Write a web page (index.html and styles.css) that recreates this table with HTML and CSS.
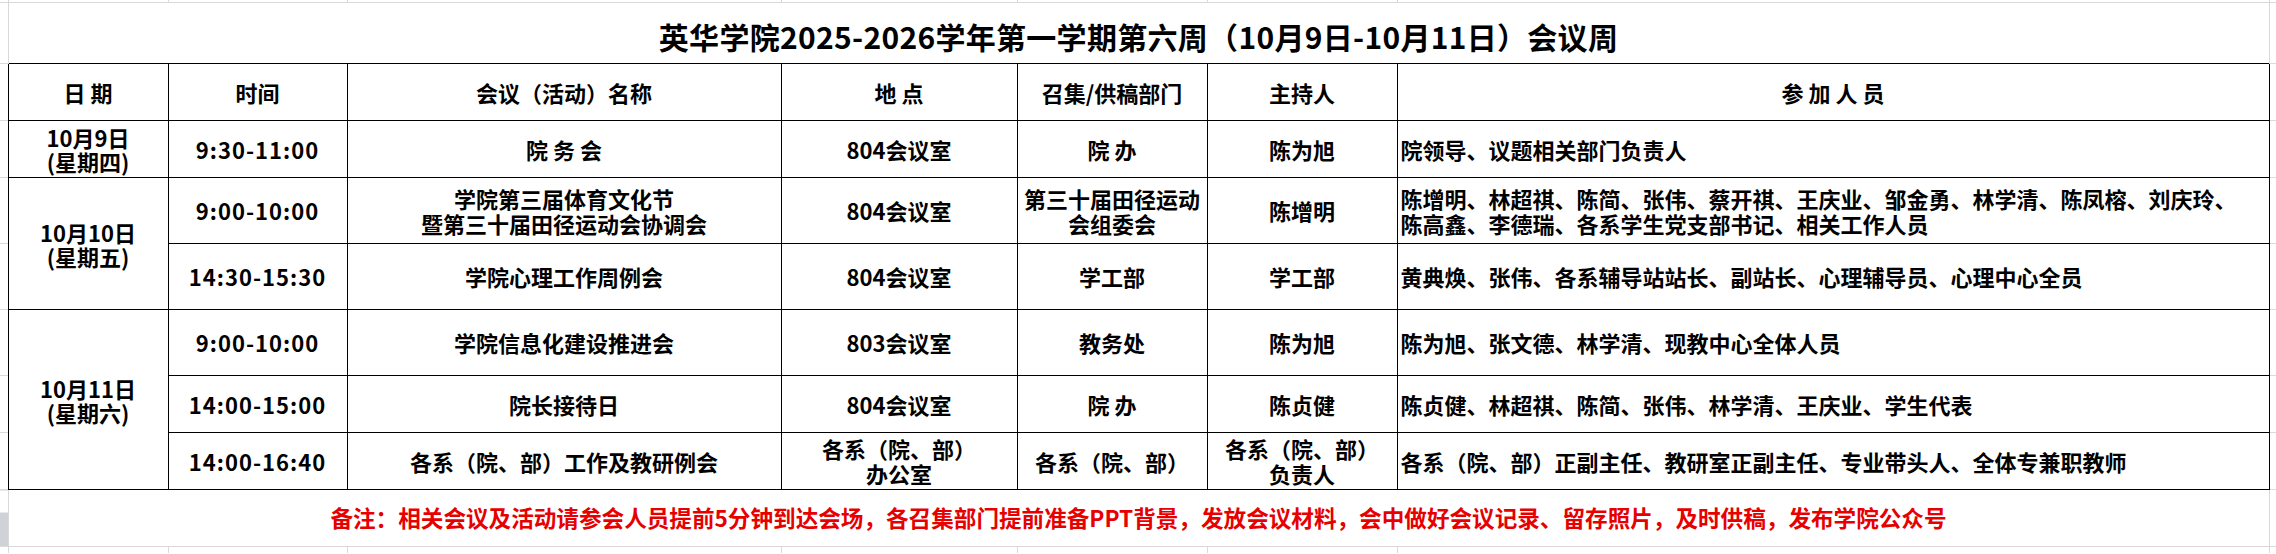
FILE: index.html
```html
<!DOCTYPE html>
<html lang="zh-CN">
<head>
<meta charset="utf-8">
<title>英华学院会议周</title>
<link rel="stylesheet" href="styles.css">
</head>
<body>
<table class="sheet">
  <colgroup>
    <col class="c-gut">
    <col class="c-date">
    <col class="c-time">
    <col class="c-name">
    <col class="c-place">
    <col class="c-dept">
    <col class="c-host">
    <col class="c-people">
    <col class="c-gut-r">
  </colgroup>
  <tr class="stub stub-top">
    <td class="gl"></td><td></td><td></td><td></td><td></td><td></td><td></td><td></td><td class="gr"></td>
  </tr>
  <tr class="row-title">
    <td class="gl"></td>
    <td class="title" colspan="7">英华学院2025-2026学年第一学期第六周（10月9日-10月11日）会议周</td>
    <td class="gr"></td>
  </tr>
  <tr class="row-57 head">
    <td class="gl"></td>
    <th>日 期</th>
    <th>时间</th>
    <th>会议（活动）名称</th>
    <th>地 点</th>
    <th>召集/供稿部门</th>
    <th>主持人</th>
    <th>参 加 人 员</th>
    <td class="gr"></td>
  </tr>
  <tr class="row-57 data">
    <td class="gl"></td>
    <td class="cell date">10月9日<br>(星期四)</td>
    <td class="cell time">9:30-11:00</td>
    <td class="cell">院 务 会</td>
    <td class="cell">804会议室</td>
    <td class="cell">院 办</td>
    <td class="cell">陈为旭</td>
    <td class="cell people">院领导、议题相关部门负责人</td>
    <td class="gr"></td>
  </tr>
  <tr class="row-66 data">
    <td class="gl"></td>
    <td class="cell date" rowspan="2">10月10日<br>(星期五)</td>
    <td class="cell time">9:00-10:00</td>
    <td class="cell">学院第三届体育文化节<br>暨第三十届田径运动会协调会</td>
    <td class="cell">804会议室</td>
    <td class="cell">第三十届田径运动<br>会组委会</td>
    <td class="cell">陈增明</td>
    <td class="cell people">陈增明、林超祺、陈简、张伟、蔡开祺、王庆业、邹金勇、林学清、陈凤榕、刘庆玲、<br>陈高鑫、李德瑞、各系学生党支部书记、相关工作人员</td>
    <td class="gr"></td>
  </tr>
  <tr class="row-66 data">
    <td class="gl"></td>
    <td class="cell time">14:30-15:30</td>
    <td class="cell">学院心理工作周例会</td>
    <td class="cell">804会议室</td>
    <td class="cell">学工部</td>
    <td class="cell">学工部</td>
    <td class="cell people">黄典焕、张伟、各系辅导站站长、副站长、心理辅导员、心理中心全员</td>
    <td class="gr"></td>
  </tr>
  <tr class="row-66 data">
    <td class="gl"></td>
    <td class="cell date" rowspan="3">10月11日<br>(星期六)</td>
    <td class="cell time">9:00-10:00</td>
    <td class="cell">学院信息化建设推进会</td>
    <td class="cell">803会议室</td>
    <td class="cell">教务处</td>
    <td class="cell">陈为旭</td>
    <td class="cell people">陈为旭、张文德、林学清、现教中心全体人员</td>
    <td class="gr"></td>
  </tr>
  <tr class="row-57 data">
    <td class="gl"></td>
    <td class="cell time">14:00-15:00</td>
    <td class="cell">院长接待日</td>
    <td class="cell">804会议室</td>
    <td class="cell">院 办</td>
    <td class="cell">陈贞健</td>
    <td class="cell people">陈贞健、林超祺、陈简、张伟、林学清、王庆业、学生代表</td>
    <td class="gr"></td>
  </tr>
  <tr class="row-57 data">
    <td class="gl"></td>
    <td class="cell time">14:00-16:40</td>
    <td class="cell">各系（院、部）工作及教研例会</td>
    <td class="cell">各系（院、部）<br>办公室</td>
    <td class="cell">各系（院、部）</td>
    <td class="cell">各系（院、部）<br>负责人</td>
    <td class="cell people">各系（院、部）正副主任、教研室正副主任、专业带头人、全体专兼职教师</td>
    <td class="gr"></td>
  </tr>
  <tr class="row-57 row-note">
    <td class="gl gl-mark"></td>
    <td class="note" colspan="7">备注：相关会议及活动请参会人员提前5分钟到达会场，各召集部门提前准备PPT背景，发放会议材料，会中做好会议记录、留存照片，及时供稿，发布学院公众号</td>
    <td class="gr"></td>
  </tr>
  <tr class="stub stub-bot">
    <td class="gl"></td><td></td><td></td><td></td><td></td><td></td><td></td><td></td><td class="gr"></td>
  </tr>
</table>
</body>
</html>
```

FILE: styles.css
```css
html, body {
  margin: 0;
  padding: 0;
  background: #ffffff;
}

body {
  font-family: "Noto Sans CJK SC", "Noto Sans", "Liberation Sans", sans-serif;
  color: #000000;
  overflow: hidden;
}

.sheet {
  border-collapse: collapse;
  table-layout: fixed;
  width: 2276px;
}

.c-gut { width: 8px; }
.c-date { width: 160px; }
.c-time { width: 179px; }
.c-name { width: 434px; }
.c-place { width: 236px; }
.c-dept { width: 190px; }
.c-host { width: 190px; }
.c-people { width: 872px; }
.c-gut-r { width: 7px; }

.sheet td,
.sheet th {
  padding: 0;
  font-weight: 700;
  font-size: 22px;
  line-height: 25px;
  text-align: center;
  vertical-align: middle;
  color: #000000;
  white-space: nowrap;
  overflow: hidden;
}

/* spreadsheet gutters */
.gl,
.gr {
  border-top: 1px solid #d9d9d9;
}

.stub td {
  border-right: 1px solid #d9d9d9;
}

.stub .gr {
  border-right: none;
}

.stub-top td {
  height: 2px;
}

.stub-top .gl,
.stub-top .gr {
  border-top: none;
}

.stub-bot td {
  height: 6px;
  border-top: 1px solid #d9d9d9;
}

.gl-mark {
  background: linear-gradient(to bottom, transparent 0, transparent 40%, #cfd3d8 40%, #cfd3d8 100%);
}

/* title */
.row-title {
  height: 61px;
}

.sheet .title {
  border-top: 1px solid #d9d9d9;
  border-left: 1px solid #d9d9d9;
  border-right: 1px solid #d9d9d9;
  font-size: 30px;
  line-height: 36px;
  letter-spacing: 0.3px;
  padding-top: 6px;
}

/* table body */
.row-57 { height: 57px; }
.row-66 { height: 66px; }

.head th,
.data .cell {
  border: 1px solid #000000;
}

.sheet .time {
  letter-spacing: 1px;
}

.sheet .date {
  line-height: 24px;
}

.sheet .people {
  text-align: left;
  padding-left: 3px;
}

/* note */
.sheet .note {
  border-left: 1px solid #d9d9d9;
  border-right: 1px solid #d9d9d9;
  border-bottom: 1px solid #d9d9d9;
  color: #e60000;
  font-size: 22.6px;
  line-height: 28px;
}
```
